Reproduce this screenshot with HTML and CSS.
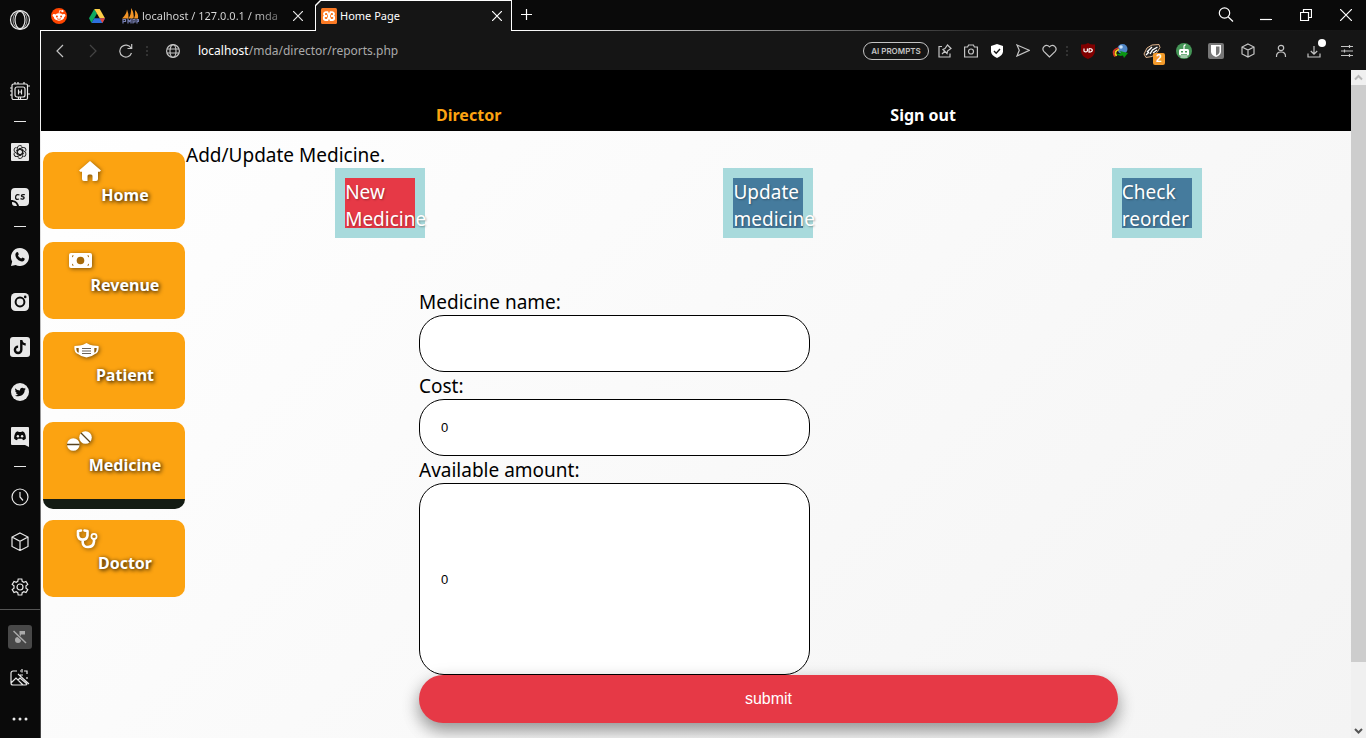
FILE: index.html
```html
<!DOCTYPE html>
<html lang="en">
<head>
<meta charset="utf-8">
<meta name="viewport" content="width=device-width, initial-scale=1">
<title>Home Page</title>
<link rel="stylesheet" href="styles.css">
</head>
<body>
<div class="browser">
  <aside class="dock" aria-label="Browser sidebar">
    <button class="dock-item dock-logo" aria-label="Opera menu"><svg width="22" height="22" viewBox="0 0 22 22" class="line"><circle cx="11" cy="11" r="9.5"/><ellipse cx="11" cy="11" rx="5" ry="8.7"/><ellipse cx="11" cy="11" rx="7" ry="9.2" stroke-width=".7"/></svg></button>
    <button class="dock-item" aria-label="GX Control"><svg width="20" height="20" viewBox="0 0 20 20" class="line"><rect x="2" y="2" width="15.500" height="15.500" rx="1.500"/><rect x="5" y="5" width="10" height="10" rx="2"/><path d="M8.500 7.500v5M11.500 7.500v5M8.500 10h3M5 0v2M8 0v2M14 0v2M0 6h2M0 9h2M0 13h2M18 4h2M18 12h2M8.500 15v3M10.500 15v3"/></svg></button>
    <span class="dock-dash"></span>
    <button class="dock-item" aria-label="ChatGPT"><svg width="18" height="18" viewBox="0 0 18 18"><rect width="18" height="18" rx="1" fill="#e8e8e8"/><g fill="none" stroke="#111" stroke-width=".9"><path id="petal" d="M9 6.300L6.300 7.900v4.200M6.300 7.900V5.200a2.700 2.700 0 0 1 5-1.400"/><use href="#petal" transform="rotate(60 9 9)"/><use href="#petal" transform="rotate(120 9 9)"/><use href="#petal" transform="rotate(180 9 9)"/><use href="#petal" transform="rotate(240 9 9)"/><use href="#petal" transform="rotate(300 9 9)"/></g></svg></button>
    <button class="dock-item" aria-label="ChatSonic"><svg width="18" height="18" viewBox="0 0 18 18"><path d="M4 0h10a4 4 0 0 1 4 4v10a4 4 0 0 1-4 4H8C7 14 4 12 0 12V4a4 4 0 0 1 4-4z" fill="#e8e8e8"/><path d="M1 14q4 0 5 4H4a3 3 0 0 1-3-3z" fill="#e8e8e8"/><path d="M8.500 7Q5 5.800 4.600 9t3.400 2M13.800 6.700q-3-.5-3.300.8t2 1.400q1.300.9-.2 2-1.500.4-2.800-.2" fill="none" stroke="#111" stroke-width="1.300"/></svg></button>
    <span class="dock-dash"></span>
    <button class="dock-item" aria-label="WhatsApp"><svg width="18" height="18" viewBox="0 0 18 18"><path d="M9 0a9 9 0 1 1-4.300 16.900L0 18l1.200-4.500A9 9 0 0 1 9 0z" fill="#e8e8e8"/><path d="M5.700 4.300c.5-.5 1.100-.3 1.400.3l.7 1.600-.8 1.200c.6 1.400 1.700 2.500 3.300 3.200l1.200-1.100 2.100 1c.3 1.700-.9 2.900-2.500 2.900-3.500-.3-6.500-3.300-6.700-6.500-.1-1.100.5-2 1.300-2.600z" fill="#0a0a0a"/></svg></button>
    <button class="dock-item" aria-label="Instagram"><svg width="18" height="18" viewBox="0 0 18 18"><rect width="18" height="18" rx="4.500" fill="#e8e8e8"/><circle cx="9" cy="9" r="4.400" fill="none" stroke="#0a0a0a" stroke-width="2"/><circle cx="14.200" cy="3.900" r="1.300" fill="#0a0a0a"/></svg></button>
    <button class="dock-item" aria-label="TikTok"><svg width="20" height="20" viewBox="0 0 20 20"><rect width="20" height="20" rx="3" fill="#e8e8e8"/><path d="M11.300 3v9.800a3.200 3.200 0 1 1-3.200-3.200M11.300 3c.3 3 1.800 4.300 4.400 4.500" fill="none" stroke="#0a0a0a" stroke-width="2.400"/></svg></button>
    <button class="dock-item" aria-label="Twitter"><svg width="18" height="18" viewBox="0 0 18 18"><circle cx="9" cy="9" r="9" fill="#e8e8e8"/><path d="M4.300 5.200c1.200 1.400 2.800 2.200 4.700 2.300-.4-2.600 2.500-3.700 4-2.100l1.500-.6-.8 1.300 1.200-.3-1.200 1.300c.1 4.900-5.200 7.700-9.800 5.300 1.200.1 2.200-.2 3.100-.9-1-.1-1.700-.6-2-1.500h.9c-1-.4-1.600-1.100-1.600-2.200l.9.200C4 7.200 3.900 6 4.300 5.200z" fill="#0a0a0a"/></svg></button>
    <button class="dock-item" aria-label="Discord"><svg width="18" height="20" viewBox="0 0 18 20"><path d="M1 0h16a1 1 0 0 1 1 1v19l-4-2H1a1 1 0 0 1-1-1V1a1 1 0 0 1 1-1z" fill="#e8e8e8"/><path d="M5 5l2-.7.6.8h2.800l.6-.8 2 .7c1.600 2.300 2 4.600 1.800 6.800-.9.700-1.800 1.200-2.800 1.400l-.8-1.400H6.800L6 13.200c-1-.2-1.900-.7-2.800-1.400C3 9.600 3.400 7.300 5 5z" fill="#0a0a0a"/><circle cx="6.900" cy="9.200" r="1.200" fill="#e8e8e8"/><circle cx="11.100" cy="9.200" r="1.200" fill="#e8e8e8"/></svg></button>
    <span class="dock-dash"></span>
    <button class="dock-item" aria-label="History"><svg width="18" height="18" viewBox="0 0 18 18" class="line"><circle cx="9" cy="9" r="8"/><path d="M9 4v5l3 3.500"/></svg></button>
    <button class="dock-item" aria-label="Extensions"><svg width="18" height="19" viewBox="0 0 18 19" class="line"><path d="M9 1l8 4v9.500l-8 4-8-4V5zM1 5l8 4.300L17 5M9 9.300v9"/></svg></button>
    <button class="dock-item" aria-label="Settings"><svg width="18" height="18" viewBox="0 0 18 18" class="line"><circle cx="9" cy="9" r="3"/><path d="M7.200 1h3.600l.4 2.300 1.600 1 2.200-.9 1.800 3-1.800 1.500v2.200l1.800 1.500-1.800 3-2.200-.9-1.600 1-.4 2.300H7.200l-.4-2.300-1.600-1-2.200.9-1.800-3L3 10.100V7.900L1.200 6.400l1.800-3 2.200.9 1.600-1z"/></svg></button>
    <div class="dock-tools">
      <button class="dock-item" aria-label="Mute"><span class="dock-pad"><svg width="16" height="16" viewBox="0 0 16 16"><circle cx="6" cy="11" r="3" fill="#aaa"/><path d="M7.500 11V2H13v3.500H9V11z" fill="#aaa"/><path d="M1.500 2l12.500 12" stroke="#484848" stroke-width="3"/><path d="M1.500 2l12.500 12" stroke="#aaa" stroke-width="1.500"/></svg></span></button>
      <button class="dock-item" aria-label="Wallpaper"><svg width="20" height="18" viewBox="0 0 20 18" class="line"><path d="M7 2H3a2 2 0 0 0-2 2v10a2 2 0 0 0 2 2h12q2 0 2-1M1 14l5-5 7 7M8 11l2-2 7 6M8 5l11 10M10 2h1M14 2h3v3M17 8v2M12 0v3.500M10 6h3"/></svg></button>
      <button class="dock-item" aria-label="More"><svg width="16" height="4" viewBox="0 0 16 4" fill="#e8e8e8"><circle cx="2" cy="2" r="1.500"/><circle cx="8" cy="2" r="1.500"/><circle cx="14" cy="2" r="1.500"/></svg></button>
    </div>
  </aside>

  <div class="window">
    <div class="tabs">
      <button class="tab-pin" aria-label="Reddit"><svg width="18" height="18" viewBox="0 0 18 18"><circle cx="9" cy="9" r="8" fill="#ff4500"/><ellipse cx="9" cy="10" rx="5.200" ry="3.700" fill="#fff"/><circle cx="4" cy="8.500" r="1.400" fill="#fff"/><circle cx="14" cy="8.500" r="1.400" fill="#fff"/><circle cx="12.500" cy="4.200" r="1.100" fill="#fff"/><path d="M9 6.500l.7-3 2.800.7" fill="none" stroke="#fff" stroke-width=".8"/><circle cx="6.900" cy="9.500" r="1" fill="#ff4500"/><circle cx="11.100" cy="9.500" r="1" fill="#ff4500"/><path d="M7 11.700q2 1.300 4 0" fill="none" stroke="#ff4500" stroke-width=".8"/></svg></button>
      <button class="tab-pin" aria-label="Google Drive"><svg width="16" height="14" viewBox="0 0 16 14"><path d="M5.300 0L0 9.300 2.500 14 8 4.600z" fill="#0da960"/><path d="M5.300 0h5.400L16 9.300h-5.300z" fill="#ffcf48"/><path d="M5.300 9.300H16L13.400 14H2.500z" fill="#2d6fdd"/><path d="M10.700 9.300H16L13.400 14z" fill="#ea4335"/></svg></button>
      <div class="tab">
        <svg width="17" height="16" viewBox="0 0 17 16"><path d="M0 10.500Q4.500 6.500 5 1.500 7 6 6.500 10.500zM6.500 10.500Q9.500 6 9 0q3.500 5 2.500 10.500zM12 10.500q1.800-3.500 1-8.500Q17 6 16 10.500z" fill="#f29427"/><path d="M1 15.500v-4h2.500v2H1M6 15.500v-4l1.500 2 1.500-2v4M11 15.500v-4h2v2.500h-2M15 15.500v-4h1.500v2H15" fill="none" stroke="#7780b5" stroke-width="1.200"/></svg>
        <span class="tab-title tab-title-fade">localhost / 127.0.0.1 / mda</span>
        <button class="tab-close" aria-label="Close tab"><svg width="10" height="10" viewBox="0 0 10 10" class="line"><path d="M0 0l10 10M10 0L0 10"/></svg></button>
      </div>
      <div class="tab tab-active">
        <svg width="16" height="16" viewBox="0 0 16 16"><rect width="16" height="16" rx="1.500" fill="#fb7a24"/><path d="M6.500 4.200H5a1.800 1.800 0 0 0-.3 3.700A2 2 0 0 0 5 12h1.500L9.500 4.200H11a1.800 1.800 0 0 1 .3 3.700A2 2 0 0 1 11 12H9.500zM4.700 8H6M11.300 8H10" fill="none" stroke="#fff" stroke-width="1.800"/></svg>
        <span class="tab-title">Home Page</span>
        <button class="tab-close" aria-label="Close tab"><svg width="10" height="10" viewBox="0 0 10 10" class="line"><path d="M0 0l10 10M10 0L0 10"/></svg></button>
      </div>
      <button class="tab-new" aria-label="New tab"><svg width="11" height="11" viewBox="0 0 11 11" class="line"><path d="M5.500 0v11M0 5.500h11"/></svg></button>
      <div class="window-controls">
        <button aria-label="Search tabs"><svg width="16" height="16" viewBox="0 0 16 16" class="line"><circle cx="6.500" cy="6" r="5.200"/><path d="M10.300 10l4.700 4.500"/></svg></button>
        <button aria-label="Minimize"><svg width="12" height="12" viewBox="0 0 12 12" class="line"><path d="M0 10.500h12"/></svg></button>
        <button aria-label="Restore"><svg width="12" height="12" viewBox="0 0 12 12" class="line"><path d="M.5 3.500h8v8h-8zM3.500 3V.5h8v8H9"/></svg></button>
        <button aria-label="Close"><svg width="12" height="12" viewBox="0 0 12 12" class="line"><path d="M0 0l12 12M12 0L0 12"/></svg></button>
      </div>
    </div>

    <div class="toolbar">
      <div class="toolbar-nav">
        <button aria-label="Back"><svg width="8" height="14" viewBox="0 0 8 14" class="line"><path d="M7 1L1 7l6 6"/></svg></button>
        <button aria-label="Forward" class="dim"><svg width="8" height="14" viewBox="0 0 8 14" class="line"><path d="M1 1l6 6-6 6"/></svg></button>
        <button aria-label="Reload"><svg width="14" height="14" viewBox="0 0 14 14" class="line"><path d="M12.500 9A6 6 0 1 1 12 4M12.700 0v4.500H8.500"/></svg></button>
      </div>
      <span class="dots"></span>
      <button class="site-info" aria-label="Site information"><svg width="14" height="14" viewBox="0 0 14 14" class="line"><circle cx="7" cy="7" r="6.400"/><ellipse cx="7" cy="7" rx="3" ry="6.400"/><path d="M1 5h12M1 9h12"/></svg></button>
      <p class="address"><span class="address-host">localhost</span>/mda/director/reports.php</p>
      <button class="prompts">AI PROMPTS</button>
      <div class="page-actions">
        <button aria-label="Pinboard"><svg width="14" height="14" viewBox="0 0 14 14" class="line"><path d="M4 2.500H1v10.500h11V9.500M4 10l3-3M5 5.500l4 4 .5-2.500L13 4.500 9.500 1 7 4.500z"/></svg></button>
        <button aria-label="Snapshot"><svg width="14" height="14" viewBox="0 0 14 14" class="line"><path d="M.6 3h3l1-2h4.800l1 2h3v10H.6z"/><circle cx="7" cy="7.500" r="2.500"/></svg></button>
        <button aria-label="Ad blocker"><svg width="14" height="14" viewBox="0 0 14 14"><path d="M7 0l6 2v5.500Q13 11 7 14 1 11 1 7.500V2z" fill="#fff"/><path d="M4 7l2.200 2.200L10 5" fill="none" stroke="#151515" stroke-width="1.400"/></svg></button>
        <button aria-label="Send"><svg width="14" height="13" viewBox="0 0 14 13" class="line"><path d="M1 1l12.300 5.300L1 12l2.300-5.700z"/></svg></button>
        <button aria-label="Bookmark"><svg width="15" height="14" viewBox="0 0 15 14" class="line"><path d="M7.500 13L1.800 7.400C-.8 4.200 3.600-1.200 7.500 2.800c3.900-4 8.300 1.400 5.700 4.600z"/></svg></button>
      </div>
      <span class="dots"></span>
      <div class="extensions">
        <button aria-label="uBlock Origin"><svg width="16" height="16" viewBox="0 0 16 16"><path d="M8 0q3 2 7 1.500V8q0 5-7 8Q1 13 1 8V1.500Q5 2 8 0z" fill="#800000"/><path d="M4 5.500v2.600q1.700 1.600 3.400 0V5.500M9 5.500v3.600q3.300 0 3.300-1.800T9 5.500" fill="none" stroke="#fff" stroke-width="1.200"/></svg></button>
        <button aria-label="Download manager"><svg width="16" height="14" viewBox="0 0 16 14"><circle cx="10.500" cy="5" r="5" fill="#4f86c6"/><circle cx="9" cy="3" r="1.800" fill="#c9e2fa"/><path d="M3 12.500Q-1 6 6.500 4" fill="none" stroke="#d83224" stroke-width="1.800"/><path d="M4.500 12Q1.500 7 7 5.500" fill="none" stroke="#f2d21c" stroke-width="1.800"/><path d="M4 9.500q3 1 5-.5l-1-2 8 2-4 5-1-2.500q-4 1.500-7-2z" fill="#0b9513"/></svg></button>
        <button aria-label="Privacy Badger" class="has-badge"><svg width="18" height="14" viewBox="0 0 18 14"><path d="M1 10l3-6 5-3 7-.5 1 3-3 5-5 4-6 1z" fill="#222" stroke="#ddb18a"/><path d="M4 8l5-5M7 10l2.500-4 5-3M3 11l3-3M10 9l4-3" stroke="#fff" stroke-width="1.400" fill="none"/></svg><span class="badge">2</span></button>
        <button aria-label="Robot extension"><svg width="16" height="16" viewBox="0 0 16 16"><circle cx="8" cy="8" r="8" fill="#459657"/><rect x="3" y="6" width="10" height="6.500" rx="1.500" fill="#fff"/><path d="M8 6V3l1.500-1.500" stroke="#fff" stroke-width="1.200" fill="none"/><path d="M5 8h2v1.500H5zM9 8h2v1.500H9zM5 11h6v.8H5z" fill="#459657"/><path d="M4.500 13.500h7v1h-7z" fill="#fff"/></svg></button>
        <button aria-label="Bitwarden"><svg width="16" height="16" viewBox="0 0 16 16"><rect width="16" height="16" rx="2" fill="#777"/><path d="M3 2h10v6.500Q13 12 8 14 3 12 3 8.500z" fill="#fff"/><path d="M8 3.500h3.500v5Q11.500 11 8 12.500z" fill="#777"/></svg></button>
        <button aria-label="Extensions"><svg width="14" height="15" viewBox="0 0 14 15" class="line"><path d="M7 1l6 3v7l-6 3-6-3V4zM1 4l6 3 6-3M7 7v7"/></svg></button>
      </div>
      <div class="browser-actions">
        <button aria-label="Profile"><svg width="12" height="14" viewBox="0 0 12 14" class="line"><circle cx="6" cy="4" r="2.700"/><path d="M1.500 13q-.3-5 4.500-5t4.500 5"/></svg></button>
        <button aria-label="Downloads" class="has-badge"><svg width="14" height="14" viewBox="0 0 14 14" class="line"><path d="M1 9.500V13h12V9.500M7 2v8M3.800 7L7 10.200 10.200 7"/></svg><span class="notice"></span></button>
        <button aria-label="Easy setup"><svg width="12" height="12" viewBox="0 0 12 12" class="line"><path d="M0 1.500h12M0 6h12M0 10.500h12M8.500 0v3M3.500 4.500v3M8.500 9v3"/></svg></button>
      </div>
    </div>

    <div class="viewport">
      <div class="page">
        <header class="site-header">
          <a class="current" href="#">Director</a>
          <a href="#">Sign out</a>
        </header>
        <div class="layout">
          <nav class="side-nav" aria-label="Sections">
            <a class="nav-card" href="#"><span class="nav-content"><svg width="22" height="20" viewBox="0 0 22 20"><path d="M11 0l11 9.500-1.300 1.200H19V18a2 2 0 0 1-2 2h-3.500v-5a1.500 1.500 0 0 0-1.500-1.500h-2A1.500 1.500 0 0 0 8.500 15v5H5a2 2 0 0 1-2-2v-7.300H1.300L0 9.500z"/></svg><span>Home</span></span></a>
            <a class="nav-card" href="#"><span class="nav-content"><svg width="23" height="20" viewBox="0 0 23 20"><rect y="2" width="23" height="15" rx="2"/><circle class="nav-ink" cx="11.500" cy="9.500" r="3.800"/><path class="nav-ink" d="M3 4.500h2L3 6.500zM18 4.500h2v2zM3 12.500l2 2H3zM20 12.500v2h-2z"/></svg><span>Revenue</span></span></a>
            <a class="nav-card" href="#"><span class="nav-content"><svg width="25" height="20" viewBox="0 0 25 20"><path d="M6 4.500q3-.5 6.500-2.500Q16 4 19 4.500l5.500.5q.8 7-3.500 8-3.500 3-8.500 3.500-5-.5-8.500-3.500-4.300-1-3.500-8z"/><path d="M4.700 7H2.300q0 4 2.400 4.700zM20.300 7h2.400q0 4-2.400 4.700z" fill="#8d5b0b"/><path d="M8 7.500h9M8 10h9M8 12.500h9" stroke="#6b6257" stroke-width="1"/></svg><span>Patient</span></span></a>
            <a class="nav-card nav-card-active" href="#"><span class="nav-content"><svg width="25" height="20" viewBox="0 0 25 20"><circle cx="18.500" cy="6.500" r="6.300"/><circle cx="6.300" cy="13.500" r="6.300"/><path d="M0 13.500h12.600M14 2l9 9" stroke="#59431f" stroke-width="1.300"/></svg><span>Medicine</span></span></a>
            <a class="nav-card" href="#"><span class="nav-content"><svg width="22" height="20" viewBox="0 0 22 20"><path d="M5 1.500L2 2v4.500a4.800 4.800 0 0 0 9.500 0V2l-3-.5M6.700 11v2.500c0 6 10.500 6.500 11.300-1V10" fill="none" stroke="#fff" stroke-width="2.600" stroke-linecap="round" stroke-linejoin="round"/><circle cx="18" cy="7.500" r="2.600" fill="none" stroke="#fff" stroke-width="1.700"/></svg><span>Doctor</span></span></a>
          </nav>
          <main class="content">
            <h1>Add/Update Medicine.</h1>
            <div class="actions">
              <button class="action action-selected">New Medicine</button>
              <button class="action">Update medicine</button>
              <button class="action">Check reorder</button>
            </div>
            <form class="medicine-form">
              <label for="name">Medicine name:</label>
              <input id="name" type="text">
              <label for="cost">Cost:</label>
              <input id="cost" type="text" value="0">
              <label for="amount">Available amount:</label>
              <input id="amount" class="amount" type="text" value="0">
              <button class="submit" type="submit">submit</button>
            </form>
          </main>
        </div>
      </div>
      <div class="scrollbar" aria-hidden="true">
        <svg width="15" height="15" viewBox="0 0 15 15"><path d="M4 9.500L7.500 6 11 9.500" fill="none" stroke="#b8b8b8" stroke-width="2"/></svg>
        <div class="track"><div class="thumb"></div></div>
        <svg width="15" height="15" viewBox="0 0 15 15"><path d="M4 6l3.500 3.500L11 6" fill="none" stroke="#555" stroke-width="2"/></svg>
      </div>
    </div>
  </div>
</div>
</body>
</html>
```
FILE: styles.css
```css
* { box-sizing: border-box; }
body { margin: 0; background: #0a0a0a; font-family: "Noto Sans", sans-serif; }
button { margin: 0; padding: 0; border: 0; background: none; color: inherit; font: inherit; }
a { text-decoration: none; }
svg { display: block; flex: none; }
.line { fill: none; stroke: currentColor; stroke-width: 1.2; }

.browser { display: flex; height: 100vh; overflow: hidden; }

/* Left dock */
.dock {
  flex: none; width: 41px; padding-right: 1px; color: #e8e8e8;
  display: flex; flex-direction: column;
  background: linear-gradient(#fff, #ddd 30%, #444 80%) right 30px / 1px 100% no-repeat #0a0a0a;
}
.dock-item { flex: none; height: 45px; display: flex; align-items: center; justify-content: center; }
.dock-logo { height: 40px; margin-bottom: 29px; }
.dock-dash { flex: none; height: 15px; display: flex; align-items: center; justify-content: center; }
.dock-dash::before { content: ""; width: 12px; height: 1px; background: #e8e8e8; }
.dock-tools { border-top: 1px solid #555; padding-top: 6px; display: flex; flex-direction: column; }
.dock-tools .dock-item { height: 41px; }
.dock-pad { width: 24px; height: 24px; border-radius: 3px; background: #484848; display: grid; place-items: center; }

/* Tab strip */
.window { flex: 1; min-width: 0; display: flex; flex-direction: column; }
.tabs {
  flex: none; height: 31px; display: flex; color: #e8e8e8; font-size: 11px; line-height: 16px;
  background: linear-gradient(90deg, #fff 36%, #222 72%, #151515) bottom / 100% 1px no-repeat #0a0a0a;
}
.tab-pin { width: 38px; padding-right: 2px; display: grid; place-items: center; }
.tab { width: 198px; padding: 0 12px 0 5px; display: flex; align-items: center; gap: 3px; position: relative; }
.tab-title { flex: 1; overflow: hidden; white-space: nowrap; }
.tab-title-fade { background: linear-gradient(90deg, #ddd 80%, #555); background-clip: text; color: transparent; }
.tab-close { width: 18px; height: 30px; display: grid; place-items: center; justify-items: end; }
.tab-active { width: 197px; padding: 0 10px 0 6px; color: #fff; background: #fff; clip-path: polygon(0 5px, 5px 0, 100% 0, 100% 100%, 0 100%); isolation: isolate; }
.tab-active::before { content: ""; position: absolute; z-index: -1; inset: 1px 1px 0 1px; background: #151515; clip-path: polygon(0 5px, 5px 0, 100% 0, 100% 100%, 0 100%); }
.tab-new { width: 28px; height: 28px; display: grid; place-items: center; color: #fff; }
.window-controls { margin-left: auto; display: flex; height: 30px; color: #fff; }
.window-controls button { width: 40px; display: grid; place-items: center; }

/* Address bar */
.toolbar { flex: none; height: 39px; padding-right: 3px; background: #151515; color: #c4c4c4; display: flex; align-items: center; }
.toolbar button { height: 30px; display: grid; place-items: center; }
.toolbar-nav { display: flex; padding-left: 2px; }
.toolbar-nav button { width: 33px; }
.toolbar .dim { color: #444; }
.dots { flex: none; width: 10px; height: 12px; background: radial-gradient(circle, #333 1px, transparent 1px) center / 10px 4px; }
.toolbar .site-info { width: 42px; }
.address { flex: 1; margin: 0; padding-left: 4px; font: 12px/16px "Noto Sans", sans-serif; color: #aaa; white-space: nowrap; overflow: hidden; }
.address-host { color: #fff; }
.toolbar .prompts { width: 66px; height: 18px; margin-right: 3px; border: 1px solid #c4c4c4; border-radius: 9px; font: 600 8px/16px Inter, sans-serif; }
.page-actions, .extensions, .browser-actions { display: flex; }
.page-actions button { width: 26px; }
.extensions button { width: 32px; }
.browser-actions button { width: 33px; }
.has-badge { position: relative; }
.badge { position: absolute; right: 3px; bottom: 1px; width: 12px; height: 12px; border-radius: 2px; background: #f39a2b; color: #fff; font: bold 10px/12px "Liberation Sans", sans-serif; }
.notice { position: absolute; right: 4px; top: 3px; width: 8px; height: 8px; border-radius: 50%; background: #fff; }

/* Page */
.viewport { flex: 1; min-height: 0; display: flex; }
.page { flex: 1; min-width: 0; overflow: hidden; display: flex; flex-direction: column; background: linear-gradient(135deg, #fff, #f4f4f4); color: #000; }
.site-header { flex: none; height: 61px; padding: 34px 6px 0; background: #000; display: flex; justify-content: space-evenly; font: bold 16px/22px "Noto Sans", sans-serif; }
.site-header a { color: #fff; }
.site-header .current { color: #fca311; }
.layout { flex: 1; display: flex; }
.side-nav { flex: none; width: 145px; padding: 21px 1px 0 2px; display: flex; flex-direction: column; }
.nav-card {
  flex: none; margin-bottom: 13px; min-height: 77px; padding-top: 9px; border-radius: 10px;
  background: #fca311; color: #fff; font-size: 16px; font-weight: bold; line-height: 22px;
  text-shadow: 1px 1px 4px #000; display: flex; justify-content: center; align-items: flex-start;
}
.nav-card-active { min-height: 87px; margin-bottom: 11px; border-bottom: 10px solid #141c14; }
.nav-content { display: grid; row-gap: 3px; }
.nav-content svg { fill: #fff; overflow: visible; filter: drop-shadow(1px 1px 2px rgb(0 0 0 / 50%)); }
.nav-content span { padding-left: 22px; }
.nav-content .nav-ink { fill: #a56a0b; }

.content { flex: 1; min-width: 0; padding-top: 10px; }
h1 { margin: 0; padding-top: 2px; font-size: 19px; font-weight: 400; line-height: 25px; }
.actions { display: flex; justify-content: space-around; }
.action { width: 90px; height: 70px; padding-top: 1px; border: 10px solid #a8dadc; background: #457b9d; color: #fff; text-align: left; text-shadow: 1px 1px 2px rgb(0 0 0 / 30%); font-size: 19px; line-height: 27px; display: flex; align-items: flex-start; }
.action-selected { background: #e63946; }
.medicine-form { width: 60%; margin: 50px auto 0; display: flex; flex-direction: column; align-items: flex-start; }
.medicine-form label { padding-top: 2px; font-size: 19px; line-height: 25px; }
.medicine-form input { width: 56%; height: 57px; padding: 0 21px; border: 1px solid #000; border-radius: 25px; background: #fff; font: 13px "Liberation Sans", sans-serif; }
.medicine-form .amount { height: 192px; }
.submit { width: 100%; height: 48px; border-radius: 25px; background: #e63946; color: #fff; font: 16px "Liberation Sans", sans-serif; box-shadow: 0 8px 16px rgb(0 0 0 / 30%), 0 6px 20px rgb(0 0 0 / 15%); }

.scrollbar { flex: none; width: 15px; display: flex; flex-direction: column; background: #f0f0f0; }
.track { flex: 1; }
.thumb { height: 90.4%; background: #cdcdcd; }
```
